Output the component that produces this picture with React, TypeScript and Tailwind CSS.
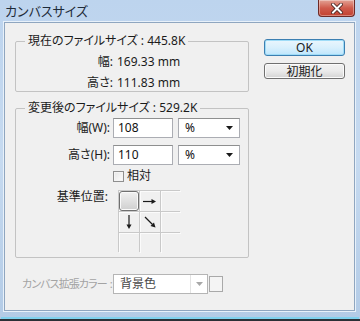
import React from 'react';

const font = "font-['Noto_Sans','Noto_Sans_CJK_JP',sans-serif] [font-feature-settings:'palt']";

const Caret = ({ color = '#1a1a1a' }: { color?: string }) => (
    <svg width="7" height="4" viewBox="0 0 7 4">
        <path d="M0 0h7L3.5 4z" fill={color} />
    </svg>
);

const ArrowCell = ({ dir }: { dir: 'right' | 'down' | 'diag' }) => {
    const paths = {
        right: { line: 'M3 10.5h10', head: 'M16 10.5l-4.5-2.5v5z' },
        down: { line: 'M10 3v10', head: 'M10 17l-2.5-4.5h5z' },
        diag: { line: 'M5 5l7.5 7.5', head: 'M15.5 15.5l-5-1.5 3.5-3.5z' },
    }[dir];
    return (
        <svg width="20" height="20" viewBox="0 0 20 20">
            <path d={paths.line} stroke="#1a1a1a" strokeWidth="1.2" fill="none" />
            <path d={paths.head} fill="#1a1a1a" />
        </svg>
    );
};

const AnchorGrid = () => {
    const cells = [0, 1, 2, 3, 4, 5, 6, 7, 8];
    return (
        <div className="grid grid-cols-[repeat(3,20px)] grid-rows-[repeat(3,20px)] gap-px bg-[#c9c9c9] border border-[#c9c9c9] w-[62px] h-[62px]">
            {cells.map((i) => (
                <div key={i} className="bg-[#f0f0f0] flex items-center justify-center shadow-[inset_1px_1px_0_#fbfbfb]">
                    {i === 0 && (
                        <div className="w-[20px] h-[20px] rounded-[3px] border border-[#707070] bg-gradient-to-b from-[#f1f1f1] to-[#cfcfcf] shadow-[inset_0_0_0_1px_#fafafa]" />
                    )}
                    {i === 1 && <ArrowCell dir="right" />}
                    {i === 3 && <ArrowCell dir="down" />}
                    {i === 4 && <ArrowCell dir="diag" />}
                </div>
            ))}
        </div>
    );
};

const SizeInput = ({ value }: { value: string }) => (
    <div className="w-[60px] h-[20px] bg-white border border-[#abadb3] border-t-[#8e8f8f] flex items-center pl-[4px] text-[12px] text-[#111]">
        {value}
    </div>
);

const UnitSelect = () => (
    <div className="ml-[5px] w-[62px] h-[20px] bg-white border border-[#abadb3] border-t-[#8e8f8f] flex items-center justify-between pl-[6px] pr-[6px] text-[12px] text-[#111]">
        <span>%</span>
        <Caret />
    </div>
);

export default function App() {
    return (
        <div className={`w-[360px] h-[321px] bg-[#2b3036] flex flex-col overflow-hidden text-[#1b1b1b] ${font}`}>
            <div className="h-[319px] flex flex-col bg-gradient-to-b from-[#bdd4ee] via-[#c6daf0] to-[#b3cbe6]">
                {/* title bar */}
                <div className="h-[22px] flex justify-between shrink-0">
                    <div className="pl-[5px] pt-[2px] text-[13px] leading-[18px] text-[#1e2b3a]">カンバスサイズ</div>
                    <div className="mr-[5px] w-[37px] h-[17px] rounded-b-[4px] border border-t-0 border-[#6e2a26] bg-gradient-to-b from-[#e2a295] via-[#cf5b4c] to-[#c2402f] flex items-center justify-center shadow-[inset_0_0_0_1px_rgba(255,255,255,0.35)]">
                        <svg width="12" height="11" viewBox="0 0 12 11">
                            <path d="M2 1.5l8 8M10 1.5l-8 8" stroke="#3a1a18" strokeWidth="3.6" strokeLinecap="square" />
                            <path d="M2 1.5l8 8M10 1.5l-8 8" stroke="#ffffff" strokeWidth="2" strokeLinecap="square" />
                        </svg>
                    </div>
                </div>

                {/* client area */}
                <div className="ml-[4px] mr-[5px] h-[289px] shrink-0 border border-[#8fa6c0] bg-[#f0f0f0] flex shadow-[0_0_0_1px_#e8f1fa]">
                    {/* left column */}
                    <div className="pl-[10px] pt-[10px] flex flex-col">
                        <fieldset className="w-[234px] border border-[#c3c3c3] rounded-[2px]">
                            <legend className="ml-[9px] px-[3px] text-[12px] leading-[16px]">現在のファイルサイズ : 445.8K</legend>
                            <div className="flex h-[18px] mt-[4px] items-center text-[12px]">
                                <span className="w-[97px] text-right">幅:</span>
                                <span className="pl-[4px]">169.33 mm</span>
                            </div>
                            <div className="flex h-[17px] mt-[3px] items-center text-[12px]">
                                <span className="w-[97px] text-right">高さ:</span>
                                <span className="pl-[4px]">111.83 mm</span>
                            </div>
                        </fieldset>

                        <fieldset className="mt-[8px] w-[234px] border border-[#c3c3c3] rounded-[2px] pb-[5px]">
                            <legend className="ml-[9px] px-[3px] text-[12px] leading-[16px]">変更後のファイルサイズ : 529.2K</legend>
                            <div className="flex h-[20px] mt-[2px] items-center text-[12px]">
                                <span className="w-[97px] text-right pr-[3px]">幅(W):</span>
                                <SizeInput value="108" />
                                <UnitSelect />
                            </div>
                            <div className="flex h-[20px] mt-[7px] items-center text-[12px]">
                                <span className="w-[97px] text-right pr-[3px]">高さ(H):</span>
                                <SizeInput value="110" />
                                <UnitSelect />
                            </div>
                            <div className="flex h-[14px] mt-[4px] items-center pl-[97px] text-[12px]">
                                <div className="w-[11px] h-[11px] border border-[#8f8f8f] bg-gradient-to-br from-[#e6e6e6] to-[#fdfdfd] shadow-[inset_0_0_0_1px_#f4f4f4]" />
                                <span className="ml-[3px] leading-[14px]">相対</span>
                            </div>
                            <div className="flex mt-[7px] text-[12px]">
                                <span className="w-[97px] text-right pr-[5px] leading-[16px] mt-[-1px]">基準位置:</span>
                                <div className="ml-[5px]">
                                    <AnchorGrid />
                                </div>
                            </div>
                        </fieldset>

                        <div className="mt-[16px] ml-[7px] flex items-center text-[12px]">
                            <div className="w-[91px] flex whitespace-nowrap text-[11px] text-[#a3a3a3]">
                                <span className="tracking-[-0.9px]">カンバス拡張カラー</span>
                                <span className="ml-[3px]">:</span>
                            </div>
                            <div className="w-[95px] h-[20px] bg-white border border-[#b5b5b5] flex items-center text-[#4a4a4a]">
                                <span className="pl-[6px] flex-1">背景色</span>
                                <div className="w-[17px] h-full border-l border-[#e3e3e3] flex items-center justify-center">
                                    <Caret color="#a8a8a8" />
                                </div>
                            </div>
                            <div className="ml-[1px] w-[14px] h-[16px] border border-[#a9a9a9] bg-[#f4f4f4]" />
                        </div>
                    </div>

                    {/* right column */}
                    <div className="ml-[15px] pt-[16px] flex flex-col gap-[7px]">
                        <button className="w-[81px] h-[17px] rounded-[3px] border border-[#3c7fb1] bg-gradient-to-b from-[#eaf6fd] via-[#d9f0fc] to-[#bee6fd] shadow-[inset_0_0_0_1px_#9fdcf7] text-[12px] leading-[14px]">
                            OK
                        </button>
                        <button className="w-[81px] h-[16px] rounded-[3px] border border-[#707070] bg-gradient-to-b from-[#f2f2f2] via-[#ebebeb] to-[#d4d4d4] shadow-[inset_0_0_0_1px_#fbfbfb] text-[12px] leading-[13px]">
                            初期化
                        </button>
                    </div>
                </div>

                {/* bottom frame */}
                <div className="flex-1 mx-[1px] border-b-2 border-[#7fd1ee]" />
            </div>
        </div>
    );
}
